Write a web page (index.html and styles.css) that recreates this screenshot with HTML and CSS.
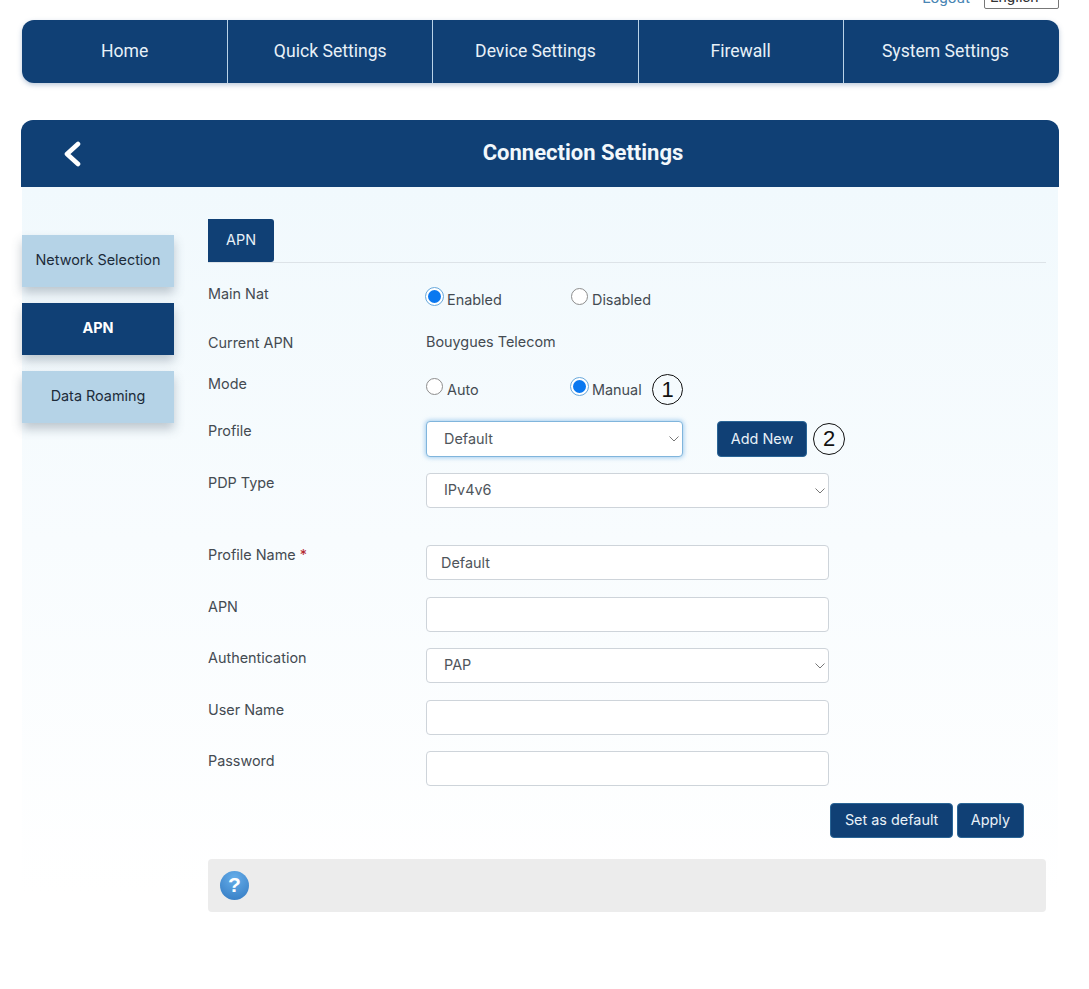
FILE: index.html
```html
<!DOCTYPE html>
<html lang="en">
<head>
<meta charset="UTF-8" />
<meta name="viewport" content="width=device-width, initial-scale=1" />
<title>Connection Settings</title>
<link rel="stylesheet" href="styles.css">
</head>
<body>

<div class="top-bar">
  <a class="logout" href="#">Logout</a>
  <div class="lang">English <span class="lang-arrow"></span></div>
</div>

<nav class="main-nav">
  <a href="#">Home</a>
  <a href="#">Quick Settings</a>
  <a href="#">Device Settings</a>
  <a href="#">Firewall</a>
  <a href="#">System Settings</a>
</nav>

<div class="panel">
  <div class="panel-head">
    <svg class="back" width="20" height="26" viewBox="0 0 20 26"><path d="M16 3 L5 13 L16 23" fill="none" stroke="#fff" stroke-width="4.6" stroke-linecap="round" stroke-linejoin="round"/></svg>
    <h1>Connection Settings</h1>
  </div>

  <div class="panel-body">
    <div class="side-menu">
      <a href="#">Network Selection</a>
      <a href="#" class="active">APN</a>
      <a href="#">Data Roaming</a>
    </div>

    <div class="content">
      <div class="tabs"><a href="#" class="tab">APN</a></div>

      <form>
        <div class="row row-nat">
          <label class="row-label">Main Nat</label>
          <div class="radios">
            <label class="radio"><input type="radio" name="nat" checked> Enabled</label>
            <label class="radio"><input type="radio" name="nat"> Disabled</label>
          </div>
        </div>

        <div class="row row-current">
          <label class="row-label">Current APN</label>
          <div class="plain-value">Bouygues Telecom</div>
        </div>

        <div class="row row-mode">
          <label class="row-label">Mode</label>
          <div class="radios">
            <label class="radio"><input type="radio" name="mode"> Auto</label>
            <label class="radio"><input type="radio" name="mode" checked> Manual</label>
            <span class="mark mark-one">1</span>
          </div>
        </div>

        <div class="row row-profile">
          <label class="row-label">Profile</label>
          <div class="inline-field">
            <div class="select-wrap select-short">
              <select class="field field-focus"><option>Default</option></select>
              <svg class="chevron" width="10" height="6" viewBox="0 0 10 6"><path d="M0.5 0.5 L5 5 L9.5 0.5" fill="none" stroke="#777" stroke-width="1"/></svg>
            </div>
            <button type="button" class="btn btn-add">Add New</button>
            <span class="mark mark-two">2</span>
          </div>
        </div>

        <div class="row row-pdp">
          <label class="row-label">PDP Type</label>
          <div class="select-wrap">
            <select class="field"><option>IPv4v6</option></select>
            <svg class="chevron" width="10" height="6" viewBox="0 0 10 6"><path d="M0.5 0.5 L5 5 L9.5 0.5" fill="none" stroke="#777" stroke-width="1"/></svg>
          </div>
        </div>

        <div class="row">
          <label class="row-label">Profile Name <span class="req">*</span></label>
          <input class="field field-text" type="text" value="Default">
        </div>

        <div class="row">
          <label class="row-label">APN</label>
          <input class="field field-text" type="text">
        </div>

        <div class="row">
          <label class="row-label">Authentication</label>
          <div class="select-wrap">
            <select class="field"><option>PAP</option></select>
            <svg class="chevron" width="10" height="6" viewBox="0 0 10 6"><path d="M0.5 0.5 L5 5 L9.5 0.5" fill="none" stroke="#777" stroke-width="1"/></svg>
          </div>
        </div>

        <div class="row">
          <label class="row-label">User Name</label>
          <input class="field field-text" type="text">
        </div>

        <div class="row">
          <label class="row-label">Password</label>
          <input class="field field-text" type="password">
        </div>

        <div class="actions">
          <button type="button" class="btn">Set as default</button>
          <button type="button" class="btn btn-apply">Apply</button>
        </div>
      </form>

      <div class="help-bar">
        <span class="help-icon">?</span>
      </div>
    </div>
  </div>
</div>

</body>
</html>
```

FILE: styles.css
```css
body {
  margin: 0;
  font-family: Inter, "Liberation Sans", sans-serif;
  font-size: 14.4px;
  color: #444b52;
  background: #fff;
}
a {
  text-decoration: none;
}
.top-bar {
  height: 20px;
  margin: 0 30px 0 21px;
  overflow: hidden;
  display: flex;
  justify-content: flex-end;
  align-items: flex-end;
  gap: 14px;
}
.logout {
  color: #4a86b4;
  font-family: Roboto, sans-serif;
  font-size: 15.3px;
  line-height: 16px;
  margin-bottom: 14px;
}
.lang {
  flex: none;
  width: 73px;
  height: 20px;
  margin-bottom: 11px;
  border: 1px solid #777;
  border-radius: 2px;
  color: #333;
  font-family: Roboto, sans-serif;
  font-size: 15px;
  line-height: 18px;
  text-indent: 5px;
}
.lang-arrow {
  display: inline-block;
  margin-left: 4px;
  border: 3px solid transparent;
  border-top: 4px solid #999;
  border-bottom: 0;
  vertical-align: middle;
}
.main-nav {
  margin: 0 30px 0 22px;
  height: 63px;
  display: grid;
  grid-template-columns: repeat(4, 205.2px) 1fr;
  background: #104075;
  border-radius: 12px;
  box-shadow: 0 2px 5px rgba(60, 100, 150, 0.35);
}
.main-nav a {
  display: flex;
  align-items: center;
  justify-content: center;
  color: #e8f1f8;
  font-family: Roboto, sans-serif;
  font-size: 17.6px;
  padding-bottom: 1px;
  border-left: 1px solid #b9d3e8;
}
.main-nav a:first-child {
  border-left: none;
}
.main-nav a:last-child {
  padding-right: 12px;
}
.panel {
  margin: 37px 30px 0 21px;
}
.panel-head {
  height: 67px;
  position: relative;
  display: flex;
  align-items: center;
  justify-content: center;
  padding-left: 86px;
  box-sizing: border-box;
  background: #104075;
  border-radius: 12px 12px 0 0;
}
.panel-head h1 {
  margin: 0 0 2px;
  color: #f2f8fc;
  font-family: Roboto, sans-serif;
  font-size: 22px;
  font-weight: 700;
}
.back {
  position: absolute;
  left: 41px;
  top: 21px;
}
.panel-body {
  display: flex;
  margin: 0 1px;
  padding-bottom: 60px;
  background: linear-gradient(#f1f9fd, #ffffff 90%);
}
.side-menu {
  width: 152px;
  flex: none;
  padding-top: 48px;
  display: flex;
  flex-direction: column;
  gap: 16px;
}
.side-menu a {
  height: 52px;
  padding-bottom: 3px;
  box-sizing: border-box;
  display: flex;
  align-items: center;
  justify-content: center;
  background: #b5d3e7;
  color: #1c2b3a;
  box-shadow: 0 6px 10px rgba(60, 80, 100, 0.3);
}
.side-menu a.active {
  background: #104075;
  color: #fff;
  font-weight: 700;
}
.content {
  width: 838px;
  margin-left: 34px;
  padding-top: 32px;
}
.tabs {
  height: 43px;
  border-bottom: 1px solid #dde3e8;
}
.tab {
  display: flex;
  align-items: center;
  justify-content: center;
  width: 66px;
  height: 43px;
  padding-bottom: 3px;
  box-sizing: border-box;
  background: #104075;
  color: #e8f1f8;
  border-radius: 0 3px 3px 0;
}
.row {
  display: grid;
  grid-template-columns: 218px 403px;
  height: 35px;
  margin-bottom: 16.5px;
}
.row-nat {
  margin-top: 21px;
  height: 31px;
  margin-bottom: 18px;
}
.row-current {
  height: 25px;
  margin-bottom: 16px;
}
.row-mode {
  height: 30px;
  margin-bottom: 17px;
}
.row-profile {
  grid-template-columns: 218px 1fr;
  height: 36px;
  margin-bottom: 16px;
}
.row-pdp {
  margin-bottom: 37px;
}
.row-label {
  display: block;
  line-height: 18px;
  padding-top: 1px;
}
.req {
  color: #b3262e;
}
.radios {
  display: flex;
  align-items: flex-start;
  position: relative;
}
.radio {
  display: flex;
  align-items: flex-start;
  width: 145px;
  line-height: 18px;
  padding-top: 7px;
}
.radio input {
  appearance: none;
  width: 17px;
  height: 17px;
  margin: -3px 4px 0 0;
  background: #fff;
  border: 1px solid #8d8d8d;
  border-radius: 50%;
  box-sizing: border-box;
  flex: none;
}
.radio input:checked {
  background: #0a78f0;
  border: 2px solid #fff;
  outline: 1.5px solid #6aa9dc;
}
.plain-value {
  line-height: 18px;
}
.mark {
  display: flex;
  align-items: center;
  justify-content: center;
  box-sizing: border-box;
  width: 31px;
  height: 31px;
  border: 1.5px solid #111;
  border-radius: 50%;
  color: #111;
  font-family: "Liberation Sans", sans-serif;
  font-size: 22px;
  flex: none;
}
.mark-one {
  position: absolute;
  left: 226px;
  top: 0;
}
.inline-field {
  display: flex;
  align-items: center;
}
.mark-two {
  margin-left: 6px;
  width: 32px;
  height: 32px;
}
.select-wrap {
  position: relative;
  height: 35px;
}
.select-short {
  width: 257px;
  height: 36px;
  flex: none;
}
.field {
  width: 100%;
  height: 100%;
  box-sizing: border-box;
  background: #fff;
  border: 1px solid #ced4da;
  border-radius: 4px;
  color: #4f555b;
  font-family: Inter, "Liberation Sans", sans-serif;
  font-size: 14.4px;
  padding: 0 17px 2px;
  appearance: none;
  outline: none;
}
.field-text {
  padding: 0 14px;
}
.field-focus {
  border-color: #80b5dc;
  box-shadow: 0 0 4px 1px rgba(100, 170, 225, 0.55);
}
.chevron {
  position: absolute;
  right: 4px;
  top: 15px;
}
.btn {
  height: 35px;
  padding: 0 13.5px 2px;
  background: #104075;
  border: 1px solid #2a6596;
  border-radius: 4px;
  color: #e8f1f8;
  font-family: Inter, "Liberation Sans", sans-serif;
  font-size: 14.4px;
}
.btn-apply {
  padding: 0 13px 2px;
}
.btn-add {
  margin-left: 34px;
  width: 90px;
  height: 36px;
  padding: 0 0 2px;
}
.actions {
  display: flex;
  justify-content: flex-end;
  gap: 4px;
  margin-top: 13px;
  padding-right: 22px;
}
.help-bar {
  height: 53px;
  margin-top: 21px;
  display: flex;
  align-items: center;
  padding-left: 12px;
  background: #ececec;
  border-radius: 4px;
}
.help-icon {
  width: 29px;
  height: 29px;
  display: flex;
  align-items: center;
  justify-content: center;
  border-radius: 50%;
  background: radial-gradient(circle at 50% 25%, #66aeea, #3178c0);
  color: #fff;
  font-family: "Liberation Sans", sans-serif;
  font-size: 21px;
  font-weight: 700;
}
```
